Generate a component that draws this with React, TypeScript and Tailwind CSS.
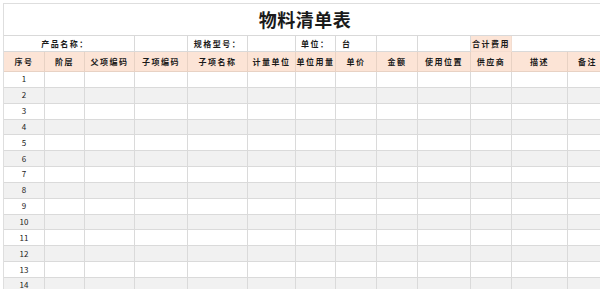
const cols = 'grid grid-cols-[41px_40px_50px_53px_60px_48px_40px_41px_41px_53px_41px_56px_40px]';
const heads = ['序号', '阶层', '父项编码', '子项编码', '子项名称', '计量单位', '单位用量', '单价', '金额', '使用位置', '供应商', '描述', '备注'];
const rows = Array.from({ length: 14 }, (_, i) => i + 1);

export default function App() {
  return (
    <div className="w-[600px] h-[289px] overflow-hidden bg-white text-[#1a1a1a]" style={{ fontFamily: '"Noto Sans CJK SC", "Noto Sans", sans-serif' }}>
      <div className="ml-[3px] mt-[3px] w-[604px] border-l border-t border-[#dedede]">
        <div className="h-[32px] flex items-center justify-center border-b border-r border-[#d9d9d9] text-[18px] font-bold tracking-[0.5px]">物料清单表</div>
        <div className={`${cols} h-[16px] text-[8px] font-bold tracking-[1.5px] leading-none`}>
          <div className="col-span-3 flex items-center justify-center border-r border-b border-[#d9d9d9] pr-[8px]">产品名称：</div>
          <div className="border-r border-b border-[#d9d9d9]"></div>
          <div className="flex items-center justify-center border-r border-b border-[#d9d9d9]">规格型号：</div>
          <div className="border-r border-b border-[#d9d9d9]"></div>
          <div className="flex items-center pl-[5px] border-r border-b border-[#d9d9d9]">单位：</div>
          <div className="flex items-center pl-[6px] border-r border-b border-[#d9d9d9]">台</div>
          <div className="border-r border-b border-[#d9d9d9]"></div>
          <div className="border-r border-b border-[#d9d9d9]"></div>
          <div className="flex items-center justify-center bg-[#fce4d6] border-r border-b border-[#f3ddd0]">合计费用</div>
          <div className="col-span-2 border-r border-b border-[#d9d9d9]"></div>
        </div>
        <div className={`${cols} h-[20px] bg-[#fce4d6] text-[8px] font-bold tracking-[1.5px] leading-none`}>
          {heads.map(h => (
            <div key={h} className="flex items-center justify-center border-r border-b border-[#e8d2c4]">{h}</div>
          ))}
        </div>
        {rows.map(n => (
          <div key={n} className={`${cols} h-[15.85px] text-[8px] leading-none ${n % 2 === 0 ? 'bg-[#f1f1f1]' : 'bg-white'}`}>
            <div className="flex items-center justify-center border-r border-b border-[#dadada]">{n}</div>
            {heads.slice(1).map(h => (
              <div key={h} className="border-r border-b border-[#dadada]"></div>
            ))}
          </div>
        ))}
      </div>
    </div>
  );
}
